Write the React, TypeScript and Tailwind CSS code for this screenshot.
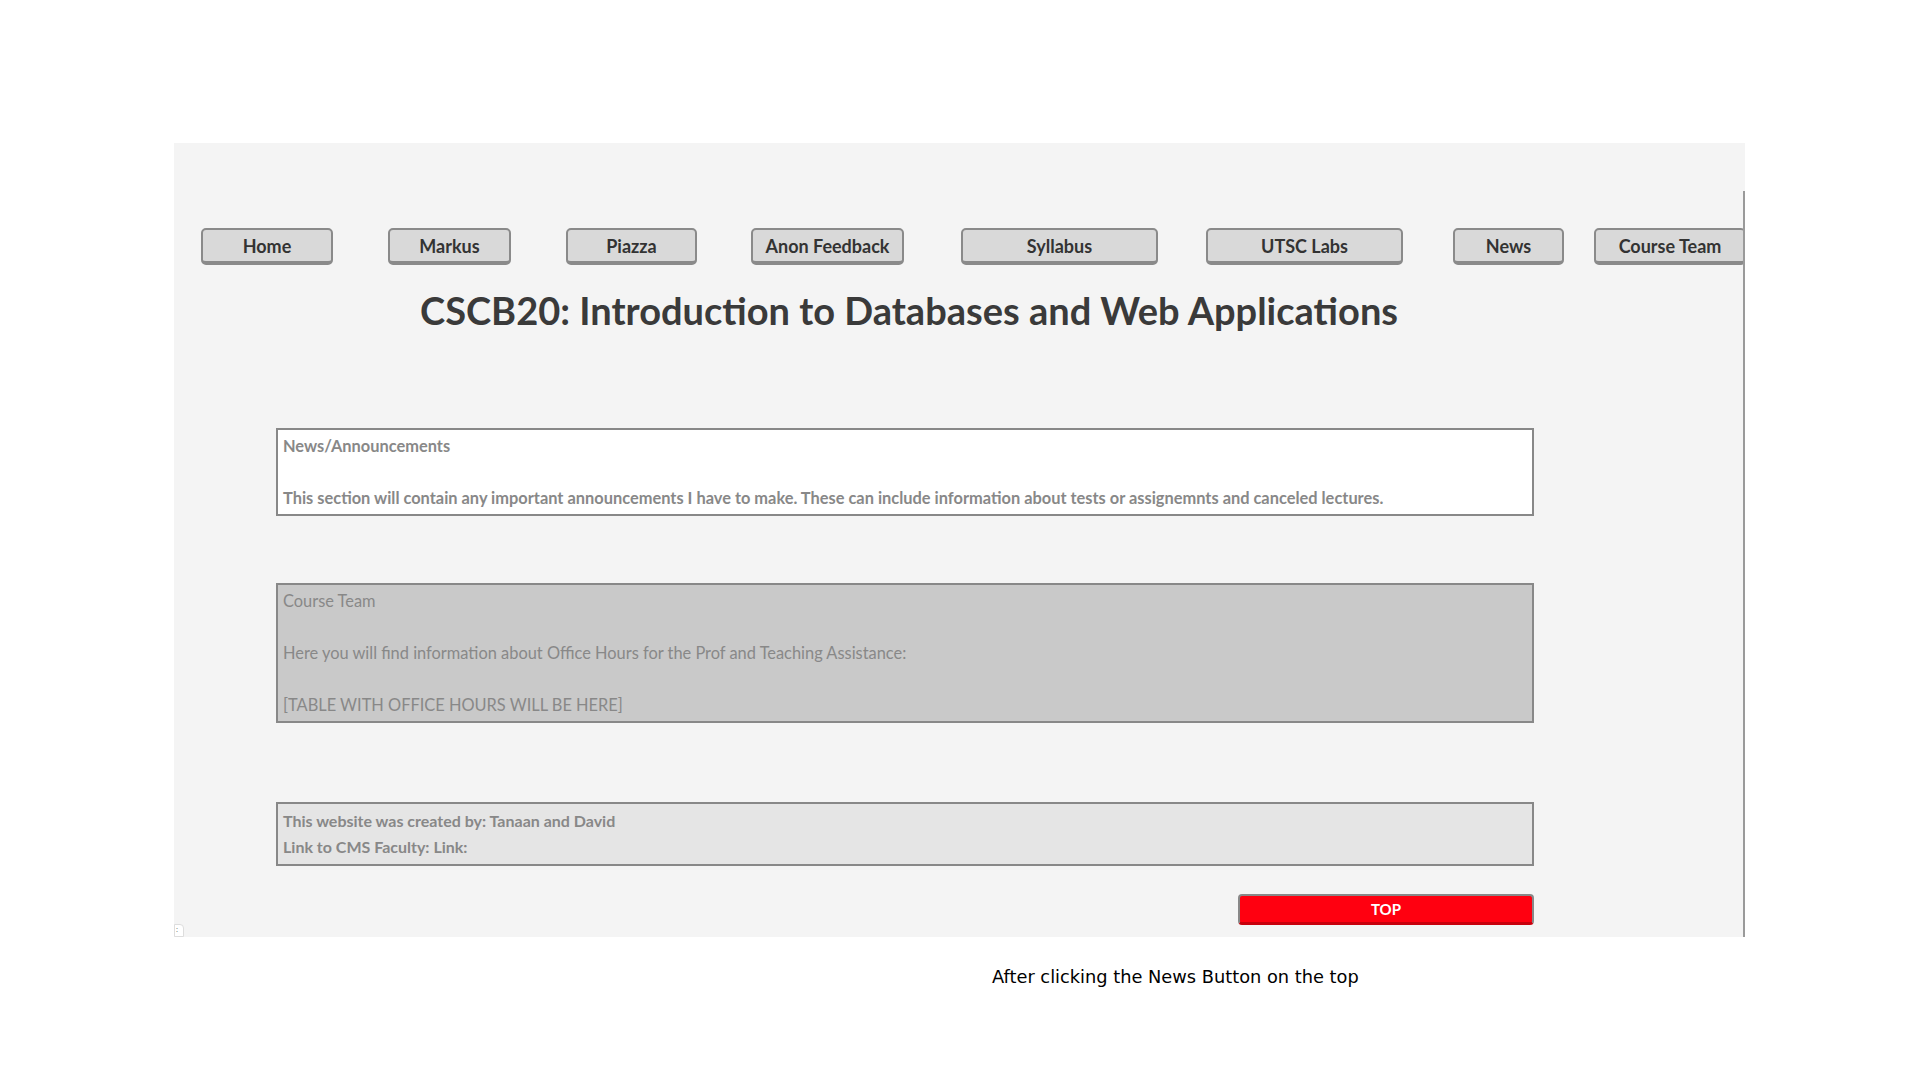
const navButtons = [
  { label: "Home", w: "w-[132px]", ml: "ml-[27px]" },
  { label: "Markus", w: "w-[123px]", ml: "ml-[55px]" },
  { label: "Piazza", w: "w-[131px]", ml: "ml-[55px]" },
  { label: "Anon Feedback", w: "w-[153px]", ml: "ml-[54px]" },
  { label: "Syllabus", w: "w-[197px]", ml: "ml-[57px]" },
  { label: "UTSC Labs", w: "w-[197px]", ml: "ml-[48px]" },
  { label: "News", w: "w-[111px]", ml: "ml-[50px]" },
  { label: "Course Team", w: "w-[152px]", ml: "ml-[30px]" },
];

function NavButton({ label, w, ml }: { label: string; w: string; ml: string }) {
  return (
    <button
      className={`${w} ${ml} shrink-0 h-[37px] bg-[#d9d9d9] border-2 border-b-[4px] border-[#8a8a8a] rounded-[5px] text-[18px] font-bold text-[#333] leading-none`}
    >
      {label}
    </button>
  );
}

export default function App() {
  return (
    <div
      className="relative w-full h-[1080px] bg-white overflow-hidden"
      style={{ fontFamily: "Lato, 'Open Sans', sans-serif" }}
    >
      <div className="pt-[143px] pl-[174px]">
        <div className="relative flex w-[1571px] h-[794px] bg-[#f4f4f4]">
          <div className="flex-1 flex flex-col overflow-hidden">
            {/* nav */}
            <div className="flex pt-[85px] whitespace-nowrap">
              {navButtons.map((b) => (
                <NavButton key={b.label} {...b} />
              ))}
            </div>

            <h1 className="mt-[22px] pl-[246px] text-[38px] leading-[46px] font-bold text-[#3a3a3a] whitespace-nowrap">
              CSCB20: Introduction to Databases and Web Applications
            </h1>

            <div className="ml-[102px] w-[1258px] mt-[95px] flex flex-col">
              <div className="bg-white border-2 border-[#888] px-[5px] py-[3px] text-[16.4px] leading-[26px] font-bold text-[#888]">
                <p>News/Announcements</p>
                <p>&nbsp;</p>
                <p>
                  This section will contain any important announcements I have to make. These can include
                  information about tests or assignemnts and canceled lectures.
                </p>
              </div>

              <div className="mt-[67px] bg-[#c9c9c9] border-2 border-[#888] px-[5px] py-[3px] text-[16.4px] leading-[26px] text-[#888]">
                <p>Course Team</p>
                <p>&nbsp;</p>
                <p>Here you will find information about Office Hours for the Prof and Teaching Assistance:</p>
                <p>&nbsp;</p>
                <p>[TABLE WITH OFFICE HOURS WILL BE HERE]</p>
              </div>

              <div className="mt-[79px] bg-[#e5e5e5] border-2 border-[#888] px-[5px] py-[4px] text-[16px] leading-[26px] font-bold text-[#888]">
                <p>This website was created by: Tanaan and David</p>
                <p>Link to CMS Faculty: Link:</p>
              </div>

              <div className="mt-[28px] flex justify-end">
                <button className="w-[296px] h-[31px] bg-[#ff0010] border-2 border-b-[3px] border-[#888] border-b-[#c8000c] rounded-[4px] text-white font-bold text-[15px] leading-none">
                  TOP
                </button>
              </div>
            </div>
          </div>
          <div className="w-[2px] mt-[48px] bg-[#9a9a9a]" />
          <div className="absolute left-0 bottom-0 w-[10px] h-[13px] bg-white border border-[#ddd] rounded-tr-[4px] text-[8px] leading-[8px] text-[#777] pl-[1px]">
            :
          </div>
        </div>
      </div>

      <p
        className="mt-[27px] pl-[992px] text-[17.8px] text-black"
        style={{ fontFamily: "'DejaVu Sans', sans-serif" }}
      >
        After clicking the News Button on the top
      </p>
    </div>
  );
}
